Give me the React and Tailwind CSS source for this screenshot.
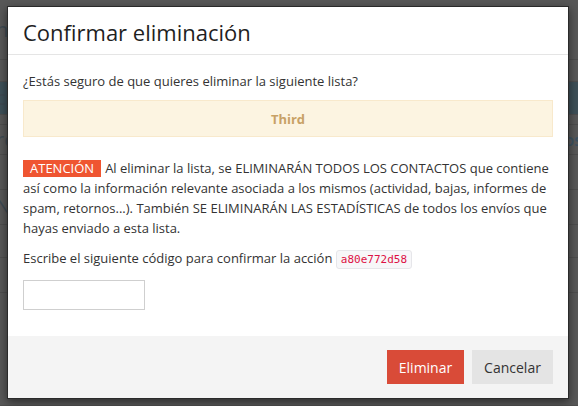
import React from "react";

export default function App() {
  const rows = [
    { h: 60, txt: "n" },
    { h: 22, txt: "" },
    { h: 33, txt: "c", teal: true },
    { h: 10, txt: "" },
    { h: 30, txt: "re", right: "os" },
    { h: 35, txt: "" },
    { h: 35, txt: "Ne" },
    { h: 33, txt: "" },
    { h: 35, txt: "" },
    { h: 113, txt: "" },
  ];
  return (
    <div
      className="relative w-[578px] h-[406px] overflow-hidden bg-[#585858]"
      style={{ fontFamily: '"Open Sans", "Liberation Sans", sans-serif' }}
    >
      {/* dimmed page behind */}
      <div className="flex flex-col w-full">
        {rows.map((r, i) => (
          <div
            key={i}
            className={`flex items-center justify-between border-b border-[#4e4e4e] text-[#3e4a52] text-[20px] ${r.teal ? "bg-[#3e5058]" : ""}`}
            style={{ height: r.h }}
          >
            <span className="-ml-[4px]">{r.txt}</span>
            <span className="text-[16px] text-[#3c5262] font-semibold mr-[-4px]">{r.right || ""}</span>
          </div>
        ))}
      </div>

      {/* modal */}
      <div className="absolute left-[7px] top-[6px] w-[562px] h-[393px] border border-[#2a2a2a] bg-white shadow-[0_3px_9px_rgba(0,0,0,0.5)] flex flex-col">
        <div className="h-[48px] border-b border-[#e5e5e5] flex items-center px-[15px]">
          <h1 className="text-[22px] leading-none text-[#1f1f1f] font-normal mt-[2px]">
            Confirmar eliminación
          </h1>
        </div>
        <div className="flex-1 px-[15px] pt-[16px] text-[13px] leading-[20px] text-[#333]">
          <p>¿Estás seguro de que quieres eliminar la siguiente lista?</p>
          <div className="mt-[9px] h-[37px] border border-[#f8e9cc] bg-[#fcf4e1] flex items-center justify-center font-bold text-[#c8a166]">
            Third
          </div>
          <p className="mt-[21px]">
            <span className="inline-block align-top mt-[2px] bg-[#ef5531] text-white px-[7px] leading-[17px] mr-[4px]">
              ATENCIÓN
            </span>
            Al eliminar la lista, se ELIMINARÁN TODOS LOS CONTACTOS que contiene así como la información relevante asociada a los mismos (actividad, bajas, informes de spam, retornos...). También SE ELIMINARÁN LAS ESTADÍSTICAS de todos los envíos que hayas enviado a esta lista.
          </p>
          <p className="mt-[10px]">
            Escribe el siguiente código para confirmar la acción{" "}
            <code
              className="inline-block px-[4px] leading-[17px] border border-[#e6e6ea] bg-[#f7f7f9] rounded-[3px] text-[#dd1144] text-[11px]"
              style={{ fontFamily: '"DejaVu Sans Mono", "Liberation Mono", monospace' }}
            >
              a80e772d58
            </code>
          </p>
          <input
            type="text"
            className="block mt-[11px] w-[122px] h-[30px] border border-[#cfcfcf] bg-white outline-none"
          />
        </div>
        <div className="h-[62px] bg-[#f4f4f4] flex items-center justify-end gap-[8px] px-[15px]">
          <button className="w-[77px] h-[34px] bg-[#d94b38] text-white text-[14px]">
            Eliminar
          </button>
          <button className="w-[81px] h-[34px] bg-[#e4e4e4] text-[#333] text-[14px]">
            Cancelar
          </button>
        </div>
      </div>
    </div>
  );
}
